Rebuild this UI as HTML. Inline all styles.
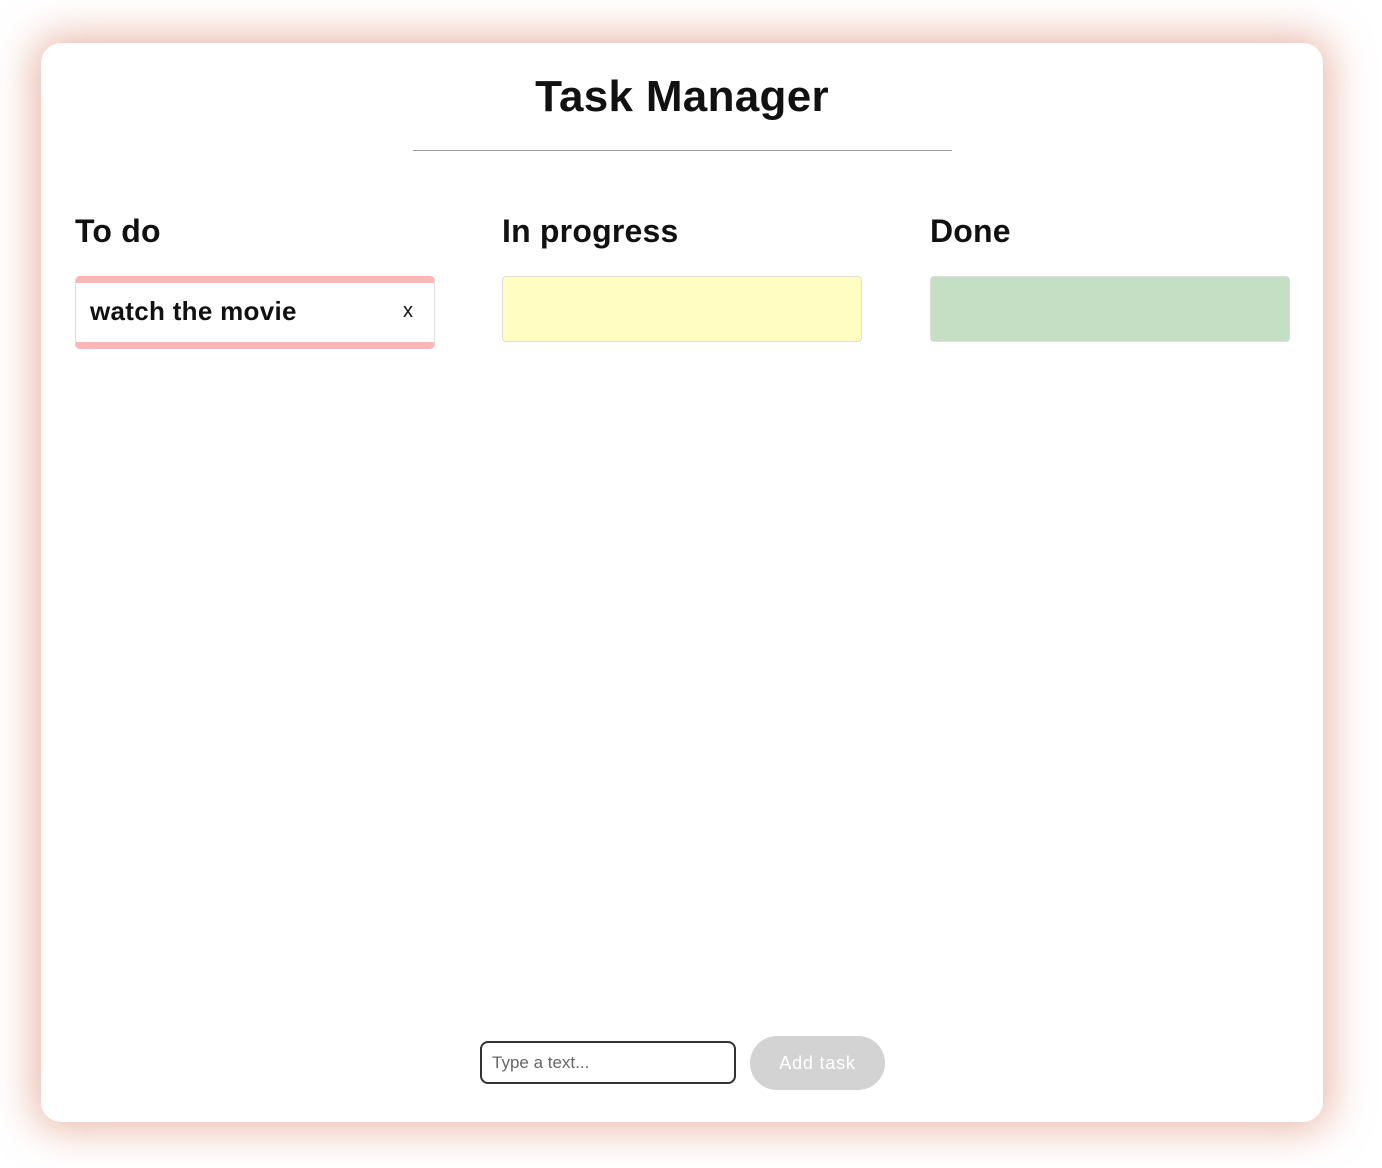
<!DOCTYPE html>
<html><head><meta charset="utf-8"><style>
html,body{margin:0;padding:0;background:#fff;width:1382px;height:1168px;overflow:hidden;font-family:"Liberation Sans",Arial,sans-serif;}
.card{position:absolute;left:41px;top:43px;width:1282px;height:1079px;background:#fff;border-radius:20px;box-shadow:0 0 40px 8px rgba(220,140,115,0.6);}
h1{position:absolute;left:0;right:0;top:29px;margin:0;text-align:center;font-size:44px;font-weight:bold;color:#111;line-height:50px;letter-spacing:0.3px;}
.hr{position:absolute;left:372px;top:107px;width:539px;height:1px;background:#999;}
.h{position:absolute;top:168px;font-size:32px;font-weight:bold;color:#111;line-height:40px;margin:0;letter-spacing:0.2px;}
.box{position:absolute;top:233px;width:358px;height:64px;border:1px solid #ddd;border-radius:4px;}
.task{position:absolute;left:34px;top:233px;width:358px;height:59px;border:1px solid #ddd;border-top:7px solid #fbb6b8;border-bottom:7px solid #fbb6b8;border-radius:5px;background:#fff;}
.task span{position:absolute;left:14px;top:13px;font-size:26px;font-weight:bold;color:#111;letter-spacing:0.3px;}
.task b{position:absolute;right:21px;top:17px;font-size:20px;font-weight:normal;color:#111;}
.inp{position:absolute;left:439px;top:998px;width:252px;height:39px;border:2px solid #333;border-radius:8px;box-sizing:content-box;}
.inp span{position:absolute;left:10px;top:10px;font-size:17px;color:#666;}
.btn{position:absolute;left:709px;top:993px;width:135px;height:54px;border-radius:27px;background:#d3d3d3;color:#fff;font-size:18px;text-align:center;line-height:54px;letter-spacing:0.8px;}
</style></head><body>
<div class="card">
<h1>Task Manager</h1>
<div class="hr"></div>
<div class="h" style="left:34px">To do</div>
<div class="h" style="left:461px">In progress</div>
<div class="h" style="left:889px">Done</div>
<div class="task"><span>watch the movie</span><b>x</b></div>
<div class="box" style="left:461px;background:#fffdc1"></div>
<div class="box" style="left:889px;background:#c4dfc3"></div>
<div class="inp"><span>Type a text...</span></div>
<div class="btn">Add task</div>
</div>
</body></html>
